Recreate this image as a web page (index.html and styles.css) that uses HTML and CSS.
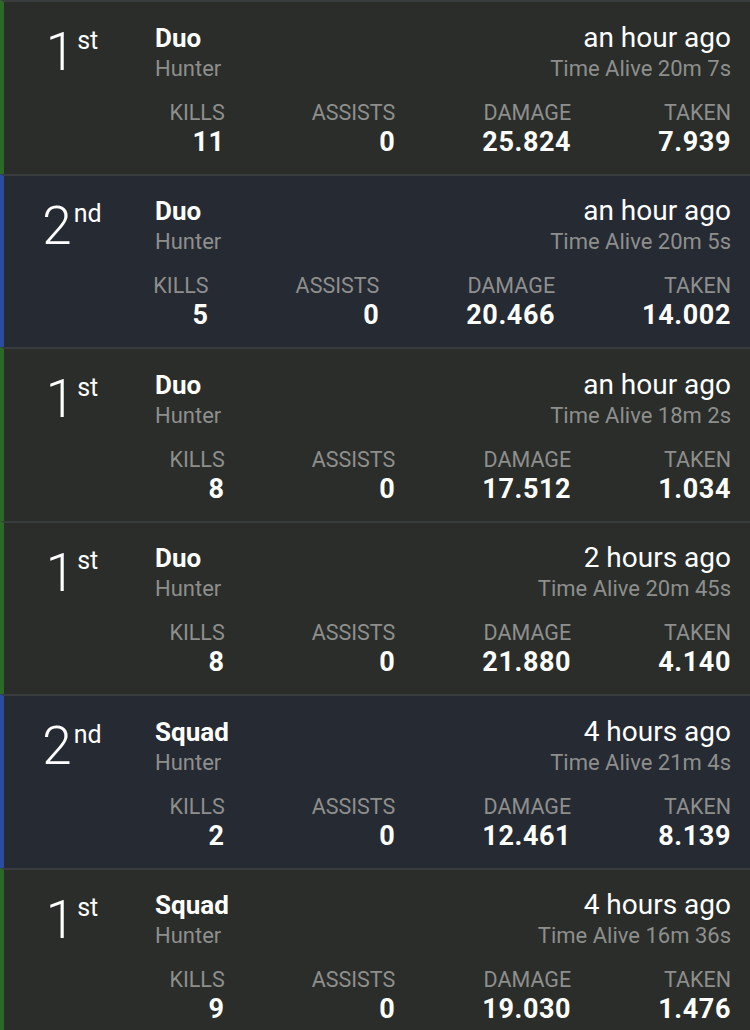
FILE: index.html
```html
<!DOCTYPE html>
<html lang="en">
<head>
<meta charset="utf-8">
<title>Matches</title>
<link rel="stylesheet" href="styles.css">
</head>
<body>
<div class="list">
  <div class="card first">
    <div class="rank"><span class="num">1</span><span class="suf">st</span></div>
    <div class="main">
      <div class="top">
        <div class="left"><div class="mode">Duo</div><div class="sub">Hunter</div></div>
        <div class="right"><div class="time">an hour ago</div><div class="sub">Time Alive 20m 7s</div></div>
      </div>
      <div class="stats">
        <div class="stat"><div class="label">KILLS</div><div class="value">11</div></div>
        <div class="stat"><div class="label">ASSISTS</div><div class="value">0</div></div>
        <div class="stat"><div class="label">DAMAGE</div><div class="value">25.824</div></div>
        <div class="stat"><div class="label">TAKEN</div><div class="value">7.939</div></div>
      </div>
    </div>
  </div>
  <div class="card second">
    <div class="rank"><span class="num">2</span><span class="suf">nd</span></div>
    <div class="main">
      <div class="top">
        <div class="left"><div class="mode">Duo</div><div class="sub">Hunter</div></div>
        <div class="right"><div class="time">an hour ago</div><div class="sub">Time Alive 20m 5s</div></div>
      </div>
      <div class="stats">
        <div class="stat"><div class="label">KILLS</div><div class="value">5</div></div>
        <div class="stat"><div class="label">ASSISTS</div><div class="value">0</div></div>
        <div class="stat"><div class="label">DAMAGE</div><div class="value">20.466</div></div>
        <div class="stat"><div class="label">TAKEN</div><div class="value">14.002</div></div>
      </div>
    </div>
  </div>
  <div class="card first">
    <div class="rank"><span class="num">1</span><span class="suf">st</span></div>
    <div class="main">
      <div class="top">
        <div class="left"><div class="mode">Duo</div><div class="sub">Hunter</div></div>
        <div class="right"><div class="time">an hour ago</div><div class="sub">Time Alive 18m 2s</div></div>
      </div>
      <div class="stats">
        <div class="stat"><div class="label">KILLS</div><div class="value">8</div></div>
        <div class="stat"><div class="label">ASSISTS</div><div class="value">0</div></div>
        <div class="stat"><div class="label">DAMAGE</div><div class="value">17.512</div></div>
        <div class="stat"><div class="label">TAKEN</div><div class="value">1.034</div></div>
      </div>
    </div>
  </div>
  <div class="card first">
    <div class="rank"><span class="num">1</span><span class="suf">st</span></div>
    <div class="main">
      <div class="top">
        <div class="left"><div class="mode">Duo</div><div class="sub">Hunter</div></div>
        <div class="right"><div class="time">2 hours ago</div><div class="sub">Time Alive 20m 45s</div></div>
      </div>
      <div class="stats">
        <div class="stat"><div class="label">KILLS</div><div class="value">8</div></div>
        <div class="stat"><div class="label">ASSISTS</div><div class="value">0</div></div>
        <div class="stat"><div class="label">DAMAGE</div><div class="value">21.880</div></div>
        <div class="stat"><div class="label">TAKEN</div><div class="value">4.140</div></div>
      </div>
    </div>
  </div>
  <div class="card second">
    <div class="rank"><span class="num">2</span><span class="suf">nd</span></div>
    <div class="main">
      <div class="top">
        <div class="left"><div class="mode">Squad</div><div class="sub">Hunter</div></div>
        <div class="right"><div class="time">4 hours ago</div><div class="sub">Time Alive 21m 4s</div></div>
      </div>
      <div class="stats">
        <div class="stat"><div class="label">KILLS</div><div class="value">2</div></div>
        <div class="stat"><div class="label">ASSISTS</div><div class="value">0</div></div>
        <div class="stat"><div class="label">DAMAGE</div><div class="value">12.461</div></div>
        <div class="stat"><div class="label">TAKEN</div><div class="value">8.139</div></div>
      </div>
    </div>
  </div>
  <div class="card first">
    <div class="rank"><span class="num">1</span><span class="suf">st</span></div>
    <div class="main">
      <div class="top">
        <div class="left"><div class="mode">Squad</div><div class="sub">Hunter</div></div>
        <div class="right"><div class="time">4 hours ago</div><div class="sub">Time Alive 16m 36s</div></div>
      </div>
      <div class="stats">
        <div class="stat"><div class="label">KILLS</div><div class="value">9</div></div>
        <div class="stat"><div class="label">ASSISTS</div><div class="value">0</div></div>
        <div class="stat"><div class="label">DAMAGE</div><div class="value">19.030</div></div>
        <div class="stat"><div class="label">TAKEN</div><div class="value">1.476</div></div>
      </div>
    </div>
  </div>
</div>
</body>
</html>
```
FILE: styles.css
```css
html, body {
  margin: 0;
  padding: 0;
  background: #2a2d29;
  font-family: Roboto, "Noto Sans", sans-serif;
  color: #ffffff;
}

.list {
  display: flex;
  flex-direction: column;
}

.card {
  display: flex;
  box-sizing: border-box;
  height: 173.5px;
  border-top: 2px solid #393c3d;
  border-left: 4px solid #2c6a27;
  background: #2a2d29;
}

.card.second {
  border-left-color: #2a4c9e;
  background: #262a33;
}

.rank {
  width: 136px;
  flex: none;
  display: flex;
  justify-content: center;
  align-items: flex-start;
  padding-top: 19px;
}

.num {
  font-size: 53px;
  font-weight: 300;
  line-height: 62px;
}

.suf {
  font-size: 25px;
  font-weight: 400;
  line-height: 30px;
  margin-left: 2px;
  margin-top: 4.5px;
}

.main {
  flex: 1;
  min-width: 0;
  display: flex;
  flex-direction: column;
  padding: 20.5px 19px 0 15px;
}

.top {
  display: flex;
  justify-content: space-between;
}

.right {
  text-align: right;
}

.mode {
  font-size: 26px;
  font-weight: 700;
  line-height: 30px;
}

.time {
  font-size: 28px;
  font-weight: 400;
  line-height: 30px;
}

.sub {
  font-size: 22px;
  line-height: 32px;
  color: #8e8f8d;
}

.stats {
  display: flex;
  justify-content: flex-end;
  gap: 87px;
  margin-top: 14px;
}

.stat {
  flex: none;
  text-align: right;
}

.label {
  font-size: 21.5px;
  line-height: 28px;
  color: #8e8f8d;
}

.value {
  font-size: 27px;
  font-weight: 700;
  line-height: 30px;
  letter-spacing: 0.6px;
}
```
